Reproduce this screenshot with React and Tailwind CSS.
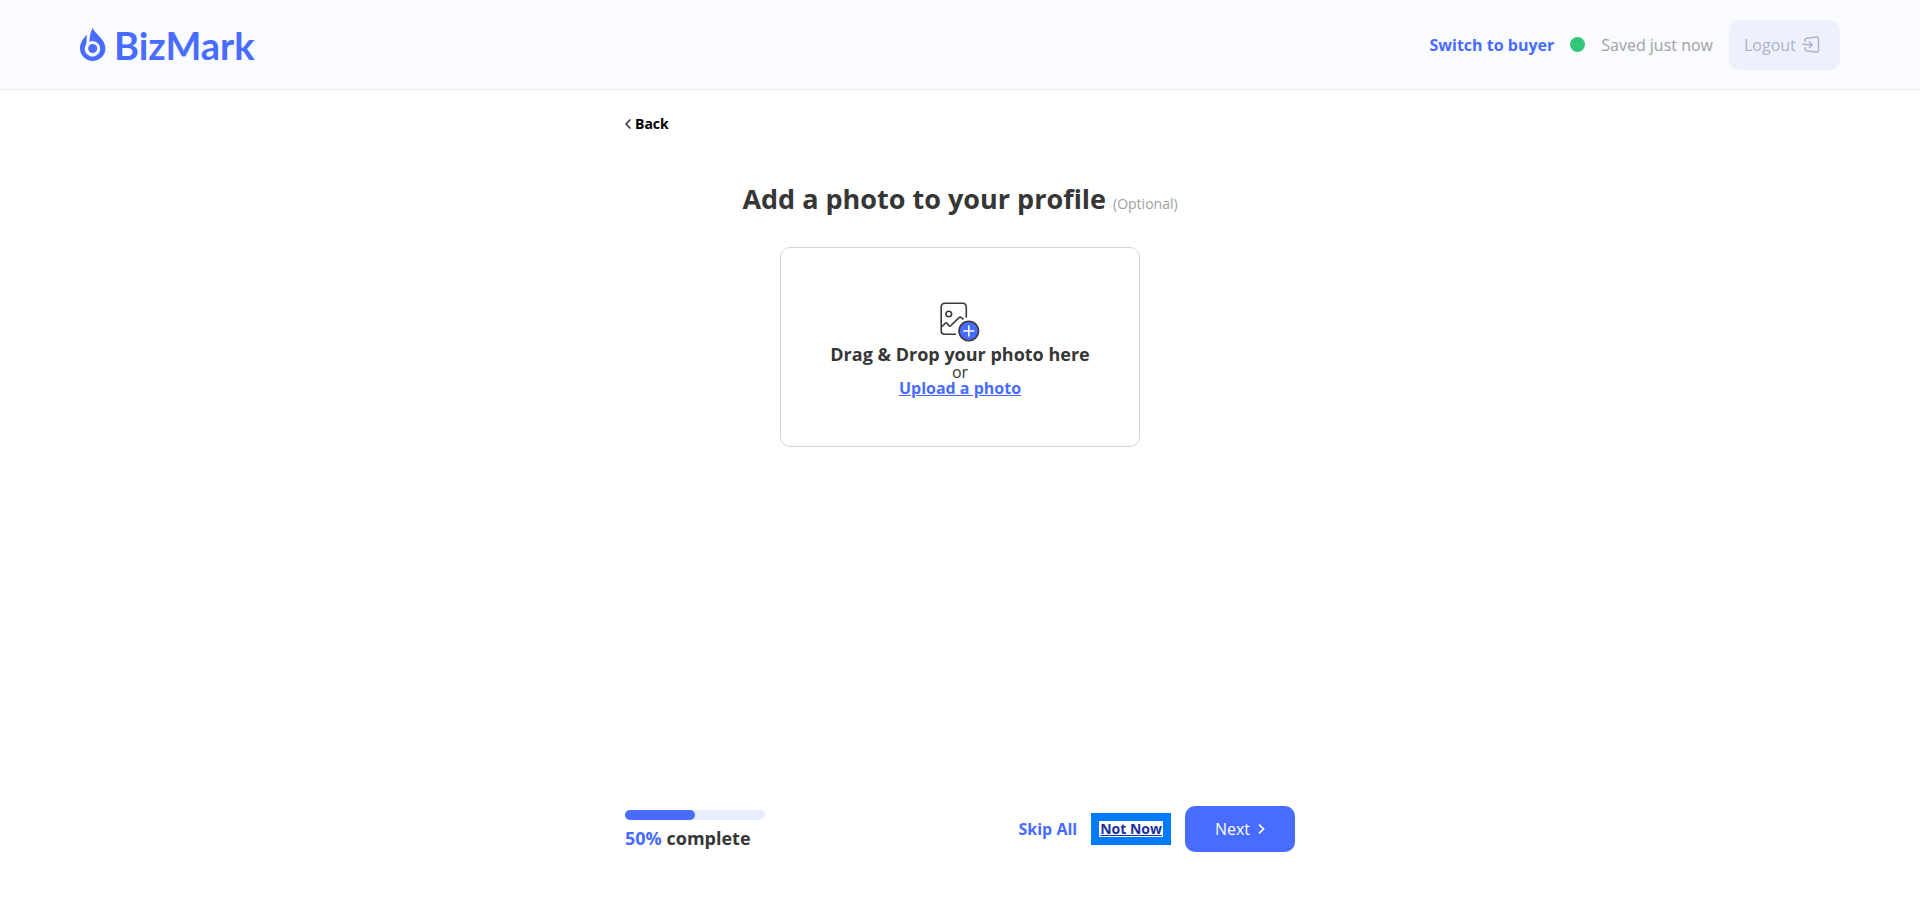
import React, { useState } from 'react';

const Logo = () => (
  <a href="#home" className="flex items-center gap-1.5 text-[#486cff]">
    <svg width="28" height="34" viewBox="0 0 28 34" fill="currentColor" aria-hidden="true">
      <path d="M12.4 0C15 4.5 19.5 8 22.4 12C24.3 14.700 25.400 17.500 25.400 20.500A12.700 12.500 0 0 1 0 20.500C0 15.500 2.600 10.800 6.900 6.800L6.300 16.200A7.700 7.700 0 1 0 9.300 13.800L10.400 5.500Z" />
      <circle cx="12.700" cy="20.500" r="4.500" />
    </svg>
    <span className="font-['Lato',sans-serif] text-[38px] leading-10 font-bold">BizMark</span>
  </a>
);

const LogoutIcon = () => (
  <svg width="18" height="18" viewBox="0 0 18 18" fill="none" stroke="currentColor" strokeWidth="1.500" strokeLinecap="round" strokeLinejoin="round" aria-hidden="true">
    <path d="M3 5.500V4.200C3 3 3.600 2.400 4.700 2.200L14.500 1C15.800 0.900 16.500 1.500 16.500 2.700V14.500C16.500 15.700 15.800 16.300 14.500 16.100L4.700 14.900C3.600 14.700 3 14.100 3 13V11.700" />
    <path d="M0.800 8.600H10M7.400 5.800L10.200 8.600L7.400 11.400" />
  </svg>
);

const PhotoIcon = () => (
  <svg width="40" height="40" viewBox="0 0 40 40" fill="none" stroke="#3a3a3a" strokeWidth="1.600" strokeLinecap="round" strokeLinejoin="round" aria-hidden="true">
    <path d="M26.300 15V5C26.300 2.500 25 1.200 22.500 1.200H5C2.500 1.200 1.200 2.500 1.200 5V28.500C1.200 31 2.500 32.300 5 32.300H15.500" />
    <circle cx="8.800" cy="12" r="2.800" />
    <path d="M1.800 24.500L5.500 21.200C6 20.800 6.500 20.800 7 21.300L9 23.700C9.500 24.200 10.200 24.200 10.700 23.700L19 15.600C19.800 15 20.500 15 21.200 15.600L23 17" />
    <circle cx="28.800" cy="29" r="9.800" fill="#486cff" />
    <path d="M28.800 24V34M23.800 29H33.800" stroke="#ffffff" />
  </svg>
);

const Header = () => (
  <header className="flex h-[90px] items-center justify-between border-b border-[#e6eaf3] bg-[#fafbff] px-20">
    <Logo />
    <div className="flex items-center gap-4">
      <a href="#buyer" className="font-bold text-[#486cff]">Switch to buyer</a>
      <span className="size-[15px] rounded-full bg-[#31c678]" />
      <span className="text-[#a0a0a0]">Saved just now</span>
      <button className="flex h-[50px] w-[111px] items-center gap-1.5 rounded-[10px] bg-[#eef1fb] pl-[15px] text-[#acb3cf]">
        Logout
        <LogoutIcon />
      </button>
    </div>
  </header>
);

const DropZone = () => (
  <div className="mt-7 flex h-[200px] w-[360px] flex-col items-center justify-center rounded-[10px] border border-[#d5d5d5] pt-1">
    <PhotoIcon />
    <p className="mt-0.5 text-lg leading-5 font-bold">Drag &amp; Drop your photo here</p>
    <p className="text-base leading-4">or</p>
    <label htmlFor="photo" className="cursor-pointer text-base leading-4 font-bold text-[#486cff] underline">
      Upload a photo
    </label>
    <input id="photo" type="file" accept="image/*" className="sr-only" />
  </div>
);

const Footer = ({ progress }) => (
  <footer className="flex items-center justify-between">
    <div className="w-[140px] pt-0.5">
      <div className="h-2.5 rounded-full bg-[#e8ecff]">
        <div className="h-full rounded-full bg-[#486cff]" style={{ width: `${progress}%` }} />
      </div>
      <p className="mt-1.5 text-lg leading-6 font-bold">
        <span className="text-[#486cff]">{progress}%</span> complete
      </p>
    </div>
    <div className="flex items-center gap-3.5">
      <button className="font-bold text-[#486cff]">Skip All</button>
      <button className="border-8 border-[#007bff] bg-white px-px text-sm leading-4 font-bold text-[#1c2f9c] underline">
        Not Now
      </button>
      <button className="flex h-[46px] w-[110px] items-center justify-center gap-2 rounded-[10px] bg-[#486cff] text-white">
        Next
        <svg width="7" height="10" viewBox="0 0 7 10" fill="none" stroke="currentColor" strokeWidth="1.700" aria-hidden="true">
          <path d="M1 0.600L5.600 5L1 9.400" />
        </svg>
      </button>
    </div>
  </footer>
);

const App = () => {
  const [progress] = useState(50);

  return (
    <div className="flex min-h-screen flex-col bg-white font-['Open_Sans',sans-serif] text-[#363636]">
      <Header />
      <main className="mx-auto flex w-full max-w-[670px] grow flex-col pt-6 pb-[59px]">
        <button className="flex items-center gap-1 self-start text-sm font-bold text-black">
          <svg width="6" height="10" viewBox="0 0 6 10" fill="none" stroke="#363636" strokeWidth="1.600" aria-hidden="true">
            <path d="M5.400 0.500L1 5L5.400 9.500" />
          </svg>
          Back
        </button>
        <div className="flex grow flex-col items-center pt-[45px]">
          <h1 className="text-[27px] leading-10 font-bold">
            Add a photo to your profile{' '}
            <span className="text-sm font-normal text-[#a0a0a0]">(Optional)</span>
          </h1>
          <DropZone />
        </div>
        <Footer progress={progress} />
      </main>
    </div>
  );
};

export default App;
